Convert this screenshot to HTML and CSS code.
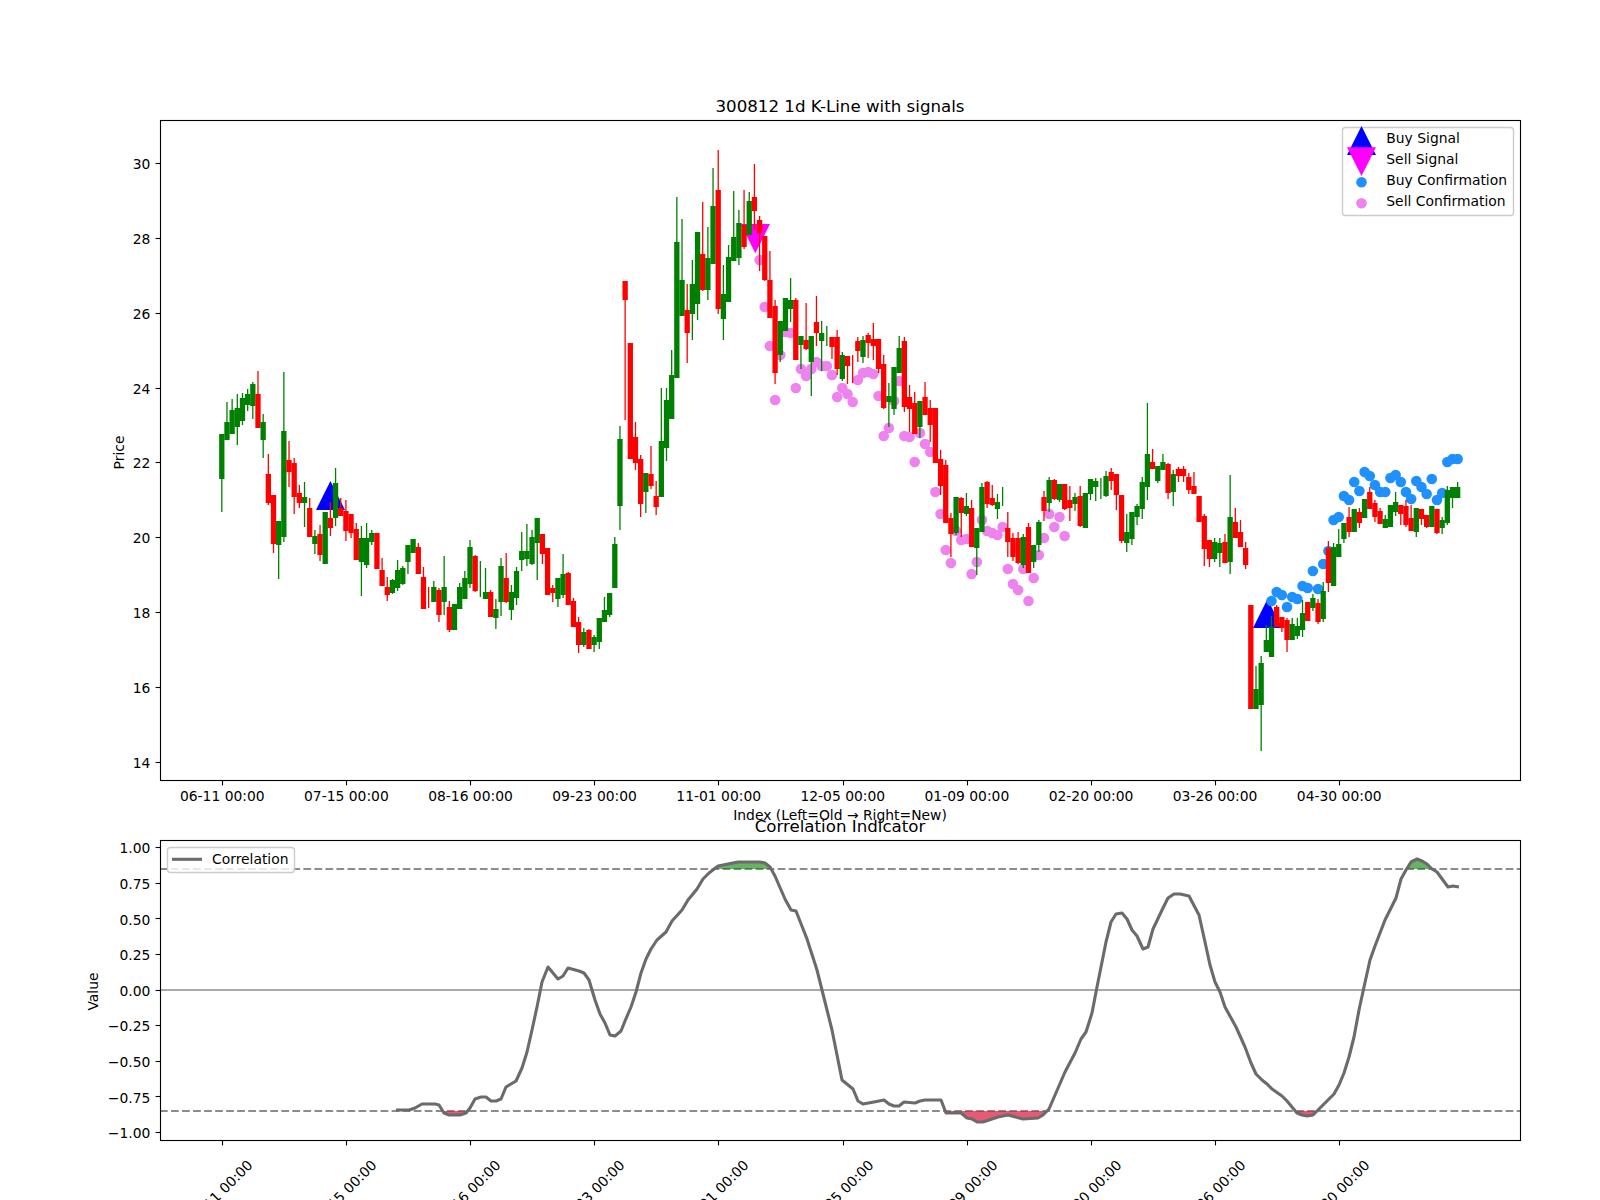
FILE: index.html
```html
<!DOCTYPE html>
<html lang="en">

<head>
    <meta charset="UTF-8">
    <title>300812 1d K-Line with signals</title>
    <link rel="stylesheet" href="styles.css">
</head>

<body>
    <div class="figure">
        <svg id="chart" class="chart" width="1600" height="1200" viewBox="0 0 1600 1200" xmlns="http://www.w3.org/2000/svg">
            <defs>
                <clipPath id="aboveUpper"><rect x="160" y="840" width="1360" height="29"></rect></clipPath>
                <clipPath id="belowLower"><rect x="160" y="1111" width="1360" height="29"></rect></clipPath>
            </defs>

            <!-- price panel -->
            <g id="pricePlot"></g>
            <rect class="frame" x="160.5" y="120.5" width="1360" height="660"></rect>
            <g id="priceTicks"></g>

            <g class="label end">
                <text x="150.3" y="168.8">30</text>
                <text x="150.3" y="243.8">28</text>
                <text x="150.3" y="318.8">26</text>
                <text x="150.3" y="393.8">24</text>
                <text x="150.3" y="467.8">22</text>
                <text x="150.3" y="542.8">20</text>
                <text x="150.3" y="617.8">18</text>
                <text x="150.3" y="692.8">16</text>
                <text x="150.3" y="767.8">14</text>
            </g>
            <g class="label middle">
                <text x="222.3" y="800.7">06-11 00:00</text>
                <text x="346.4" y="800.7">07-15 00:00</text>
                <text x="470.5" y="800.7">08-16 00:00</text>
                <text x="594.6" y="800.7">09-23 00:00</text>
                <text x="718.7" y="800.7">11-01 00:00</text>
                <text x="842.8" y="800.7">12-05 00:00</text>
                <text x="966.9" y="800.7">01-09 00:00</text>
                <text x="1091" y="800.7">02-20 00:00</text>
                <text x="1215.1" y="800.7">03-26 00:00</text>
                <text x="1339.2" y="800.7">04-30 00:00</text>
            </g>
            <text class="label middle" x="840" y="820">Index (Left=Old → Right=New)</text>
            <text class="label middle" transform="translate(123.5 452.5) rotate(-90)">Price</text>
            <text class="title" x="840" y="111.7">300812 1d K-Line with signals</text>

            <!-- price legend -->
            <rect class="legend-box" x="1342.5" y="127.5" width="171" height="88" rx="3"></rect>
            <polygon class="buy-marker" points="1361.5,126 1376,155 1347,155"></polygon>
            <polygon class="sell-marker" points="1347,147.3 1376,147.3 1361.5,176"></polygon>
            <circle class="buy-dot" cx="1361.5" cy="182.3" r="5.3"></circle>
            <circle class="sell-dot" cx="1361.5" cy="203.3" r="5.3"></circle>
            <g class="label">
                <text x="1386.3" y="143.4">Buy Signal</text>
                <text x="1386.3" y="164.4">Sell Signal</text>
                <text x="1386.3" y="185.4">Buy Confirmation</text>
                <text x="1386.3" y="206.4">Sell Confirmation</text>
            </g>

            <!-- correlation panel -->
            <line class="dash-line" x1="160" y1="869" x2="1520" y2="869"></line>
            <line class="dash-line" x1="160" y1="1111" x2="1520" y2="1111"></line>
            <line class="zero-line" x1="160" y1="990" x2="1520" y2="990"></line>
            <g id="corrPlot"></g>
            <rect class="frame" x="160.5" y="840.5" width="1360" height="300"></rect>
            <g id="corrTicks"></g>

            <g class="label end">
                <text x="150.3" y="853">1.00</text>
                <text x="150.3" y="889">0.75</text>
                <text x="150.3" y="924.6">0.50</text>
                <text x="150.3" y="960.2">0.25</text>
                <text x="150.3" y="995.8">0.00</text>
                <text x="150.3" y="1031.4">−0.25</text>
                <text x="150.3" y="1067">−0.50</text>
                <text x="150.3" y="1102.6">−0.75</text>
                <text x="150.3" y="1138.2">−1.00</text>
            </g>
            <g class="label middle">
                <text transform="translate(223.5 1196) rotate(-45)">06-11 00:00</text>
                <text transform="translate(347.5 1196) rotate(-45)">07-15 00:00</text>
                <text transform="translate(471.5 1196) rotate(-45)">08-16 00:00</text>
                <text transform="translate(595.5 1196) rotate(-45)">09-23 00:00</text>
                <text transform="translate(719.5 1196) rotate(-45)">11-01 00:00</text>
                <text transform="translate(844.5 1196) rotate(-45)">12-05 00:00</text>
                <text transform="translate(968.5 1196) rotate(-45)">01-09 00:00</text>
                <text transform="translate(1092.5 1196) rotate(-45)">02-20 00:00</text>
                <text transform="translate(1216.5 1196) rotate(-45)">03-26 00:00</text>
                <text transform="translate(1340.5 1196) rotate(-45)">04-30 00:00</text>
            </g>
            <text class="label middle" transform="translate(98 991.5) rotate(-90)">Value</text>
            <text class="title" x="840" y="831.7">Correlation Indicator</text>

            <!-- correlation legend -->
            <rect class="legend-box" x="167.5" y="847.5" width="127" height="25" rx="3"></rect>
            <line class="corr-line" x1="172" y1="859.3" x2="202" y2="859.3"></line>
            <text class="label" x="212" y="864">Correlation</text>
        </svg>
    </div>

    <script src="chart.js"></script>
</body>

</html>
```

FILE: styles.css
```css
html, body {
    margin: 0;
    padding: 0;
    background-color: #fff;
    overflow: hidden;
}

.figure {
    width: 1600px;
    height: 1200px;
}

.chart {
    display: block;
}

.frame {
    fill: none;
    stroke: #000;
    stroke-width: 1.11px;
}

.tick {
    stroke: #000;
    stroke-width: 1.11px;
}

.label {
    font-family: "DejaVu Sans", sans-serif;
    font-size: 13.89px;
    fill: #000;
}

.label.end {
    text-anchor: end;
}

.label.middle {
    text-anchor: middle;
}

.title {
    font-family: "DejaVu Sans", sans-serif;
    font-size: 16.67px;
    fill: #000;
    text-anchor: middle;
}

.legend-box {
    fill: rgba(255, 255, 255, 0.8);
    stroke: #ccc;
    stroke-width: 1.39px;
}

.buy-marker {
    fill: #0000ff;
}

.sell-marker {
    fill: #ff00ff;
}

.buy-dot {
    fill: #1e90ff;
}

.sell-dot {
    fill: #ee82ee;
}

.wick-up {
    stroke: #008000;
    stroke-width: 1.3px;
}

.wick-down {
    stroke: #ff0000;
    stroke-width: 1.3px;
}

.body-up {
    fill: #008000;
}

.body-down {
    fill: #ff0000;
}

.dash-line {
    stroke: #8c8c8c;
    stroke-width: 2.08px;
    stroke-dasharray: 7.7 3.33;
}

.zero-line {
    stroke: #a9a9a9;
    stroke-width: 2.08px;
}

.corr-line {
    fill: none;
    stroke: #6b6b6b;
    stroke-width: 3.1px;
    stroke-linejoin: round;
}

.fill-high {
    fill: #008000;
    fill-opacity: 0.6;
}

.fill-low {
    fill: #dc143c;
    fill-opacity: 0.7;
}
```

FILE: chart.js
```js
const SVG_NS = 'http://www.w3.org/2000/svg';

// candle x position from its index
const FIRST_X = 221.8;
const STEP_X = 5.171;
const BODY_W = 5.3;

// colour, body top, body bottom, wick top, wick bottom (page pixels)
const candles = [
    ['g',434,479,434,512],['g',422,440,402,440],['g',410,434,399,434],['g',408,427,394,445],['g',398,421,393,425],
    ['g',394,405,389,411],['g',384,406,382,419],['r',394,428,371,428],['g',422,440,414,458],['r',474,503,454,505],
    ['r',495,544,495,553],['g',521,545,521,579],['g',431,537,372,542],['r',460,472,441,487],['r',463,497,458,514],
    ['r',493,503,485,508],['g',497,503,482,527],['r',508,537,498,537],['g',536,544,530,554],['r',534,555,525,561],
    ['g',512,564,512,564],['r',518,528,502,536],['g',483,518,468,526],['r',508,516,498,516],['r',511,531,500,541],
    ['r',514,533,514,538],['r',529,560,523,560],['g',538,562,526,596],['g',538,565,523,568],['g',533,542,530,545],
    ['r',533,569,533,569],['r',570,586,558,586],['r',587,595,577,601],['g',580,593,579,594],['g',570,588,560,591],
    ['g',568,584,566,585],['g',545,562,545,574],['g',539,553,539,553],['r',547,574,543,574],['r',577,609,567,609],
    ['r',597,598,587,608],['g',587,602,581,602],['r',590,615,588,622],['g',587,602,556,615],['r',607,630,601,632],
    ['g',604,630,604,630],['g',587,609,583,609],['g',578,599,571,599],['g',547,584,540,588],['r',556,591,555,592],
    ['g',578,579,561,597],['g',592,599,568,599],['r',592,617,590,617],['g',609,618,599,629],['g',566,602,558,616],
    ['r',578,602,553,603],['g',592,610,585,620],['g',571,598,567,605],['g',551,560,532,571],['g',551,559,524,566],
    ['g',537,564,530,565],['g',518,543,518,580],['r',534,554,534,564],['r',548,595,548,595],['r',588,593,585,602],
    ['g',578,599,578,607],['g',574,595,554,598],['r',573,605,572,605],['r',601,627,598,627],['r',622,645,617,653],
    ['g',632,645,628,647],['r',630,649,629,649],['g',637,645,635,652],['g',618,642,618,649],['g',610,622,597,622],
    ['g',593,615,593,617],['g',544,588,537,588],['g',439,506,426,530],['r',281,300,281,420],['r',343,459,343,459],
    ['r',437,463,422,470],['r',459,504,455,517],['g',473,492,473,513],['r',474,486,446,489],['r',496,507,481,515],
    ['g',441,497,388,497],['g',400,448,388,461],['g',375,419,350,419],['g',242,378,197,378],['g',280,316,219,316],
    ['r',310,333,284,363],['g',284,314,260,340],['g',232,304,232,320],['r',254,290,202,291],['g',258,290,227,300],
    ['g',206,264,168,264],['r',190,309,150,314],['g',294,319,265,340],['g',257,302,245,302],['g',237,261,191,261],
    ['g',223,258,210,265],['r',225,247,190,249],['g',201,235,192,235],['r',197,211,164,230],['r',220,233,216,271],
    ['r',236,280,236,281],['r',280,318,251,318],['r',306,373,300,384],['g',321,355,321,362],['g',298,331,298,331],
    ['g',300,309,278,322],['r',300,360,298,360],['g',336,345,336,369],['r',340,349,303,350],['g',336,362,336,396],
    ['r',322,333,296,346],['g',333,341,321,371],['g',335,336,326,346],['r',337,347,337,359],['r',337,369,330,375],
    ['g',355,379,352,381],['r',356,366,356,384],['r',355,356,355,383],['r',341,351,337,362],['g',340,357,336,363],
    ['r',335,343,333,358],['r',339,346,323,360],['r',339,369,339,373],['r',364,408,355,409],['g',396,402,383,427],
    ['g',367,409,367,415],['g',348,373,336,373],['r',341,407,337,412],['r',397,409,385,432],['r',403,434,392,434],
    ['g',401,427,401,438],['r',397,415,382,415],['r',408,425,400,442],['r',408,463,408,463],['r',459,486,450,495],
    ['r',465,523,460,523],['r',518,534,513,557],['g',497,533,497,535],['r',498,513,497,537],['g',506,514,493,516],
    ['r',508,547,500,547],['g',528,548,528,575],['g',487,532,483,532],['r',482,504,481,508],['r',498,505,485,506],
    ['g',502,509,494,519],['g',496,497,487,506],['r',528,542,512,557],['r',538,557,533,561],['r',538,563,532,564],
    ['g',537,565,534,568],['r',527,573,523,573],['g',545,562,545,568],['g',522,545,520,552],['r',497,511,491,521],
    ['g',480,503,477,512],['r',480,499,479,500],['g',484,500,484,502],['r',484,509,484,510],['r',500,508,486,521],
    ['g',497,504,493,511],['r',496,526,486,527],['g',493,528,493,528],['g',479,494,479,500],['g',481,487,478,501],
    ['g',487,488,478,499],['g',476,496,471,497],['r',472,481,468,490],['r',474,495,474,510],['r',495,541,495,543],
    ['g',532,543,514,552],['g',512,539,512,545],['g',506,517,504,525],['g',482,509,477,519],['g',454,487,403,500],
    ['r',462,469,449,469],['g',466,481,466,483],['g',462,470,454,470],['r',464,493,463,499],['g',474,492,470,506],
    ['r',469,476,467,482],['r',469,476,466,482],['r',477,490,473,494],['r',486,494,472,494],['r',496,522,496,522],
    ['r',516,549,514,566],['r',540,559,540,567],['g',542,559,538,562],['g',543,553,538,567],['r',542,563,534,563],
    ['g',517,562,475,574],['r',522,538,508,538],['r',532,547,520,547],['r',548,565,542,569],['r',605,709,605,709],
    ['g',689,709,666,709],['g',663,705,656,751],['g',640,652,625,652],['g',627,657,616,657],['r',607,627,605,627],
    ['r',617,628,617,632],['r',620,640,618,652],['g',624,640,618,640],['g',626,636,618,639],['g',613,630,600,637],
    ['r',602,621,602,621],['g',598,608,594,611],['r',603,622,599,624],['g',591,619,582,622],['r',548,583,541,592],
    ['g',547,586,543,586],['g',544,557,529,557],['g',523,539,523,543],['r',517,532,507,537],['g',509,532,509,532],
    ['r',512,523,508,528],['g',499,518,499,518],['r',492,509,487,509],['r',503,517,500,522],['r',511,524,508,524],
    ['g',519,528,515,528],['g',505,527,505,527],['g',502,512,492,516],['r',505,514,505,525],['r',506,525,500,527],
    ['r',518,531,505,531],['g',508,532,508,537],['r',509,519,509,525],['r',515,527,515,528],['g',506,527,506,527],
    ['r',509,533,509,534],['g',520,528,517,534],['g',490,523,486,525],['g',487,498,487,508],['g',487,498,482,498]
];

// [index, y] of the confirmation dots
const sellDots = [
    [104,260],[105,307],[106,346],[107,400],[108,355],[109,332],[110,333],[111,388],[112,369],[113,376],
    [114,369],[115,362],[116,366],[117,366],[118,375],[119,397],[120,388],[121,394],[122,402],[123,380],
    [124,373],[125,372],[126,374],[127,396],[128,436],[129,428],[130,401],[131,381],[132,436],[133,437],
    [134,462],[135,433],[136,444],[137,452],[138,492],[139,514],[140,550],[141,563],[142,531],[143,540],
    [144,539],[145,574],[146,562],[147,520],[148,531],[149,533],[150,535],[151,527],[152,569],[153,584],
    [154,590],[155,569],[156,601],[157,578],[158,555],[159,538],[160,514],[161,527],[162,517],[163,536]
];
const buyDots = [
    [203,601],[204,592],[205,595],[206,607],[207,597],[208,599],[209,586],[210,588],[211,571],[212,589],
    [213,564],[214,551],[215,520],[216,517],[217,496],[218,500],[219,482],[220,491],[221,472],[222,476],
    [223,485],[224,492],[225,492],[226,478],[227,475],[228,482],[229,492],[230,499],[231,481],[232,487],
    [233,494],[234,479],[235,500],[236,493],[237,462],[238,459],[239,459]
];

// correlation curve, page pixels
const corr = [
    [396,1110],[409,1110],[415,1108],[422,1104],[428,1104],[435,1104],[439,1105],[444,1113],[449,1115],[460,1115],
    [466,1113],[470,1108],[475,1099],[481,1097],[486,1097],[491,1101],[496,1101],[501,1099],[506,1087],[516,1081],
    [522,1068],[527,1052],[532,1030],[537,1007],[542,982],[548,967],[558,979],[563,976],[568,968],[579,971],
    [584,973],[589,980],[595,1000],[600,1014],[605,1023],[610,1035],[615,1036],[621,1031],[625,1021],[631,1007],
    [636,992],[641,973],[646,959],[651,949],[657,940],[666,932],[672,921],[682,910],[688,900],[697,889],
    [703,879],[709,873],[718,866],[728,864],[738,862],[743,862],[749,862],[760,862],[765,863],[770,867],
    [775,876],[785,899],[791,910],[796,911],[807,939],[817,970],[822,990],[832,1030],[842,1080],[853,1089],
    [858,1101],[863,1104],[874,1102],[879,1101],[884,1100],[889,1104],[894,1106],[899,1106],[904,1102],[915,1103],
    [920,1101],[925,1100],[941,1100],[946,1113],[961,1113],[967,1118],[972,1119],[977,1122],[983,1122],[998,1117],
    [1008,1115],[1023,1119],[1038,1118],[1043,1115],[1049,1109],[1065,1072],[1075,1053],[1081,1039],[1086,1032],[1092,1013],
    [1097,987],[1100,972],[1106,942],[1111,922],[1116,914],[1122,913],[1127,919],[1132,930],[1137,936],[1143,949],
    [1148,947],[1153,929],[1163,908],[1168,898],[1174,894],[1180,894],[1189,896],[1199,915],[1205,942],[1210,965],
    [1215,982],[1220,992],[1225,1007],[1236,1027],[1245,1047],[1251,1063],[1256,1074],[1262,1080],[1267,1084],[1272,1089],
    [1282,1096],[1287,1101],[1297,1113],[1302,1115],[1307,1116],[1313,1115],[1323,1105],[1334,1094],[1339,1085],[1344,1073],
    [1349,1057],[1354,1037],[1359,1010],[1364,987],[1370,960],[1375,946],[1385,920],[1396,898],[1401,879],[1406,870],
    [1411,862],[1417,859],[1422,861],[1427,864],[1432,869],[1437,872],[1448,887],[1453,886],[1459,887]
];

function add(parent, tag, attrs) {
    const el = document.createElementNS(SVG_NS, tag);
    Object.keys(attrs).forEach(key => el.setAttribute(key, attrs[key]));
    parent.appendChild(el);
    return el;
}

function xOf(i) {
    return FIRST_X + STEP_X * i;
}

function drawPrices() {
    const plot = document.getElementById('pricePlot');

    // signal triangles sit under everything else
    add(plot, 'polygon', { class: 'buy-marker', points: '330.4,481 345,510 316,510' });
    add(plot, 'polygon', { class: 'buy-marker', points: '1267.5,599 1282,628 1253,628' });
    add(plot, 'polygon', { class: 'sell-marker', points: '740.7,224 770,224 755.3,253.3' });

    buyDots.forEach(d => add(plot, 'circle', { class: 'buy-dot', cx: xOf(d[0]), cy: d[1], r: 5.3 }));
    sellDots.forEach(d => add(plot, 'circle', { class: 'sell-dot', cx: xOf(d[0]), cy: d[1], r: 5.3 }));

    candles.forEach((c, i) => {
        const x = xOf(i);
        const up = c[0] === 'g';
        add(plot, 'line', { class: up ? 'wick-up' : 'wick-down', x1: x, x2: x, y1: c[3], y2: c[4] });
        // open == close days show only the wick
        if (c[2] - c[1] <= 1) return;
        add(plot, 'rect', {
            class: up ? 'body-up' : 'body-down',
            x: x - BODY_W / 2,
            y: c[1],
            width: BODY_W,
            height: c[2] - c[1]
        });
    });
}

function drawCorrelation() {
    const plot = document.getElementById('corrPlot');
    const points = corr.map(p => p.join(',')).join(' ');
    const first = corr[0][0];
    const last = corr[corr.length - 1][0];

    // area between the curve and the thresholds, clipped to the outer bands
    add(plot, 'polygon', {
        class: 'fill-high',
        points: points + ' ' + last + ',869 ' + first + ',869',
        'clip-path': 'url(#aboveUpper)'
    });
    add(plot, 'polygon', {
        class: 'fill-low',
        points: points + ' ' + last + ',1111 ' + first + ',1111',
        'clip-path': 'url(#belowLower)'
    });
    add(plot, 'polyline', { class: 'corr-line', points: points });
}

function drawTicks() {
    const tickXs = [222.5, 346.5, 470.5, 594.5, 718.5, 843.5, 967.5, 1091.5, 1215.5, 1339.5];
    const priceYs = [163.5, 238.5, 313.5, 388.5, 462.5, 537.5, 612.5, 687.5, 762.5];
    const corrYs = [847.5, 883.5, 918.5, 954.5, 990.5, 1025.5, 1061.5, 1096.5, 1132.5];
    const priceTicks = document.getElementById('priceTicks');
    const corrTicks = document.getElementById('corrTicks');

    tickXs.forEach(x => {
        add(priceTicks, 'line', { class: 'tick', x1: x, x2: x, y1: 780, y2: 785.4 });
        add(corrTicks, 'line', { class: 'tick', x1: x, x2: x, y1: 1140, y2: 1145.4 });
    });
    priceYs.forEach(y => add(priceTicks, 'line', { class: 'tick', x1: 155.6, x2: 160.5, y1: y, y2: y }));
    corrYs.forEach(y => add(corrTicks, 'line', { class: 'tick', x1: 155.6, x2: 160.5, y1: y, y2: y }));
}

drawPrices();
drawCorrelation();
drawTicks();
```
